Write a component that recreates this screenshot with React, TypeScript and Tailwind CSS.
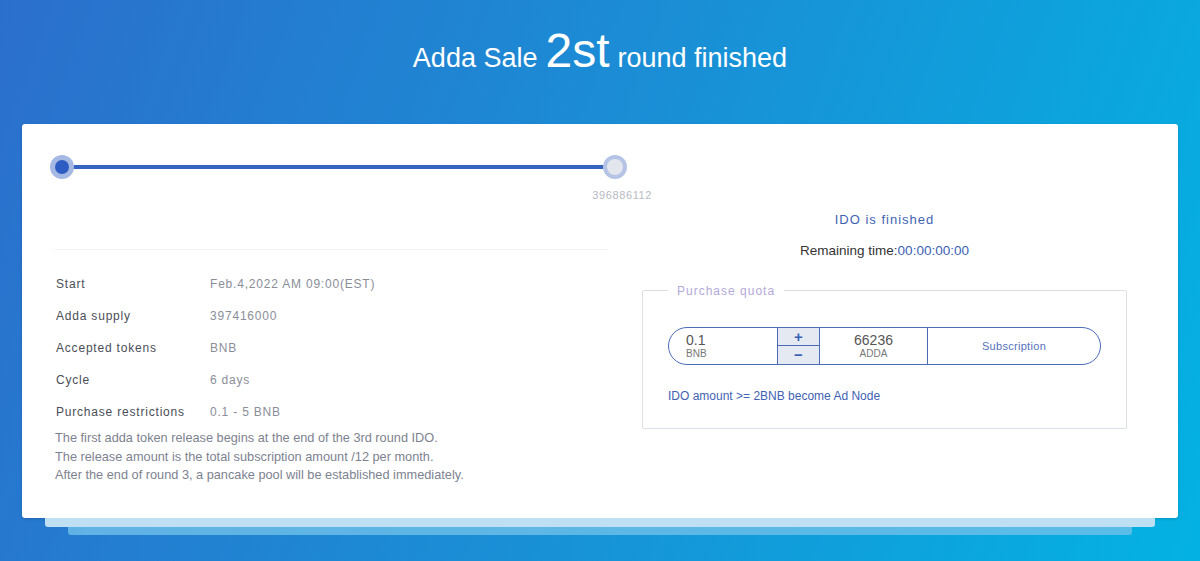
const rows = [
  { label: "Start", value: "Feb.4,2022 AM 09:00(EST)" },
  { label: "Adda supply", value: "397416000" },
  { label: "Accepted tokens", value: "BNB" },
  { label: "Cycle", value: "6 days" },
  { label: "Purchase restrictions", value: "0.1 - 5 BNB" },
];

export default function App() {
  return (
    <div className="h-[561px] w-[1200px] overflow-hidden bg-[linear-gradient(110deg,#2b6fcc_0%,#1a8fd6_50%,#03b2e2_100%)] font-['Liberation_Sans',Arial,sans-serif]">
      {/* Title */}
      <div className="flex h-[124px] items-start justify-center pt-[27px] text-white">
        <h1 className="flex items-baseline gap-[8px] font-normal">
          <span className="text-[27px]">Adda Sale</span>
          <span className="text-[48px] leading-none">2st</span>
          <span className="text-[27px]">round finished</span>
        </h1>
      </div>

      {/* Card stack */}
      <div className="mx-[22px]">
        <div className="flex h-[394px] rounded-[3px] bg-white pl-[33px] pr-[50px] pt-[31px] shadow-[0_1px_3px_rgba(0,0,0,0.15)]">
          {/* Left column */}
          <div className="w-[553px]">
            <div className="relative -ml-[5px] h-[24px] w-[577px]">
              <div className="absolute left-[12px] right-[12px] top-[10px] h-[4px] bg-[#3563c1]" />
              <div className="absolute left-0 top-0 flex h-[24px] w-[24px] items-center justify-center rounded-full bg-[#a5b9e4]">
                <div className="h-[14px] w-[14px] rounded-full bg-[#2d5dc2]" />
              </div>
              <div className="absolute right-0 top-0 flex h-[24px] w-[24px] items-center justify-center rounded-full bg-[#b4c3e6]">
                <div className="h-[16px] w-[16px] rounded-full bg-[#e3e6ec]" />
              </div>
              <div className="absolute right-[-25px] top-[32px] text-[11px] tracking-[0.6px] text-[#b6bac4]">396886112</div>
            </div>

            <div className="mt-[70px] h-px bg-[#f1f1f3]" />

            <div className="mt-[25px] flex flex-col gap-[14px] text-[12px] tracking-[0.8px]">
              {rows.map((r) => (
                <div key={r.label} className="flex h-[18px] items-center">
                  <span className="w-[155px] pl-px text-[#4a4e57]">{r.label}</span>
                  <span className="text-[#8a8e98]">{r.value}</span>
                </div>
              ))}
            </div>

            <div className="mt-[8px] text-[12.75px] leading-[18.5px] text-[#7d8290]">
              <p>The first adda token release begins at the end of the 3rd round IDO.</p>
              <p>The release amount is the total subscription amount /12 per month.</p>
              <p>After the end of round 3, a pancake pool will be established immediately.</p>
            </div>
          </div>

          {/* Right column */}
          <div className="ml-[34px] w-[485px] pt-[55px]">
            <div className="text-center text-[13px] tracking-[1px] text-[#3f63b3]">IDO is finished</div>
            <div className="mt-[11px] text-center text-[13.5px] text-[#333]">
              Remaining time:<span className="text-[#3b5fb4]">00:00:00:00</span>
            </div>

            <fieldset className="mt-[21px] h-[147px] rounded-[2px] border border-[#dcdfe7] px-[25px]">
              <legend className="px-[9px] text-[12px] tracking-[1px] text-[#b3a9d9]">Purchase quota</legend>
              <div className="mt-[27px] flex h-[38px] overflow-hidden rounded-full border border-[#4b6cb9]">
                <div className="flex w-[108px] flex-col justify-center pl-[17px] leading-none">
                  <span className="text-[14px] text-[#555]">0.1</span>
                  <span className="mt-[2px] text-[10px] text-[#777]">BNB</span>
                </div>
                <div className="flex w-[43px] flex-col border-x border-[#4b6cb9]">
                  <button className="flex h-[18px] items-center justify-center border-b border-[#4b6cb9] bg-[#e5eaf2] text-[15px] font-bold leading-none text-[#3b5fb4]">+</button>
                  <button className="flex flex-1 items-center justify-center bg-[#e5eaf2] text-[15px] font-bold leading-none text-[#3b5fb4]">−</button>
                </div>
                <div className="flex w-[108px] flex-col items-center justify-center border-r border-[#4b6cb9] leading-none">
                  <span className="text-[14px] text-[#555]">66236</span>
                  <span className="mt-[2px] text-[10px] text-[#777]">ADDA</span>
                </div>
                <button className="flex flex-1 items-center justify-center text-[11px] tracking-[0.3px] text-[#5472bb]">Subscription</button>
              </div>
              <div className="mt-[22px] text-[12px] text-[#3f62b3]">IDO amount &gt;= 2BNB become Ad Node</div>
            </fieldset>
          </div>
        </div>
        <div className="mx-[23px] h-[9px] rounded-b-[3px] bg-[#bfe0f3]" />
        <div className="mx-[46px] h-[8px] rounded-b-[3px] bg-[#6fc1e8]/80" />
      </div>
    </div>
  );
}
